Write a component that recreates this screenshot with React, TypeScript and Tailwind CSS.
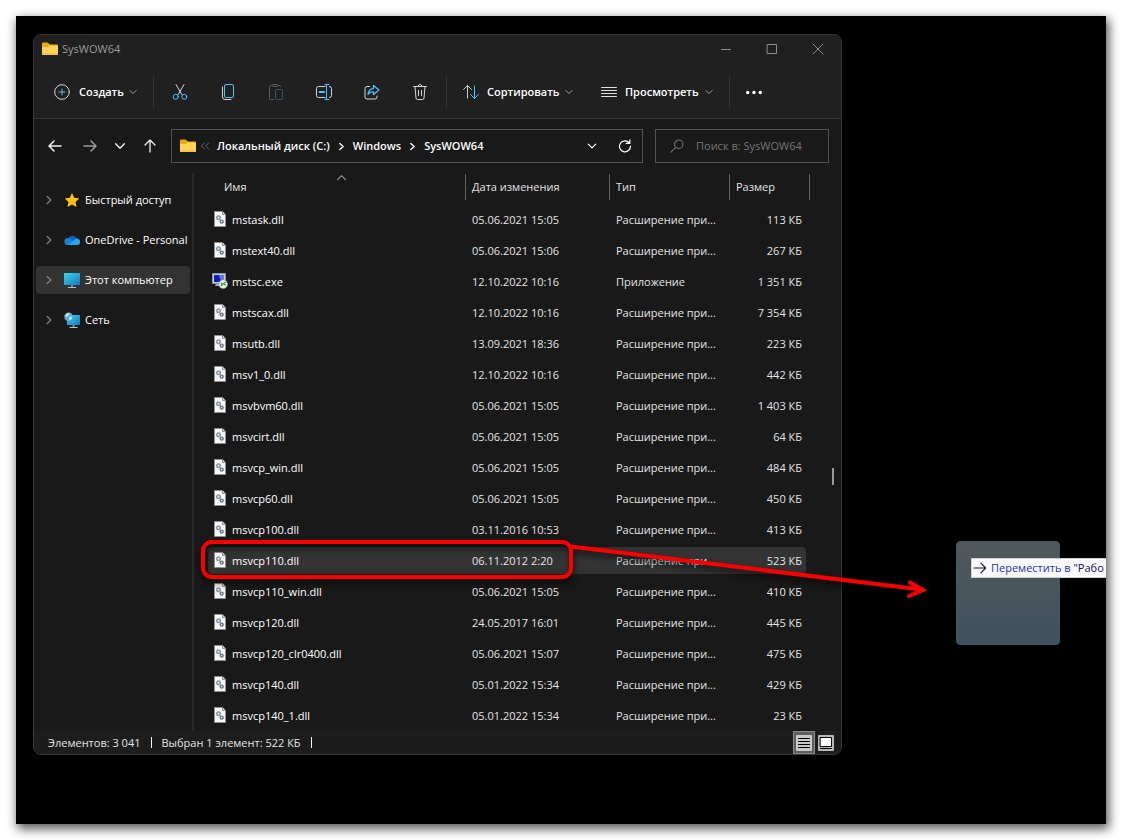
import type { ReactNode } from "react";

type FileRow = {
  name: string;
  date: string;
  type: string;
  size: string;
  exe?: boolean;
  selected?: boolean;
};

const EXT = "Расширение при...";

const files: FileRow[] = [
  { name: "mstask.dll", date: "05.06.2021 15:05", type: EXT, size: "113 КБ" },
  { name: "mstext40.dll", date: "05.06.2021 15:06", type: EXT, size: "267 КБ" },
  { name: "mstsc.exe", date: "12.10.2022 10:16", type: "Приложение", size: "1 351 КБ", exe: true },
  { name: "mstscax.dll", date: "12.10.2022 10:16", type: EXT, size: "7 354 КБ" },
  { name: "msutb.dll", date: "13.09.2021 18:36", type: EXT, size: "223 КБ" },
  { name: "msv1_0.dll", date: "12.10.2022 10:16", type: EXT, size: "442 КБ" },
  { name: "msvbvm60.dll", date: "05.06.2021 15:05", type: EXT, size: "1 403 КБ" },
  { name: "msvcirt.dll", date: "05.06.2021 15:05", type: EXT, size: "64 КБ" },
  { name: "msvcp_win.dll", date: "05.06.2021 15:05", type: EXT, size: "484 КБ" },
  { name: "msvcp60.dll", date: "05.06.2021 15:05", type: EXT, size: "450 КБ" },
  { name: "msvcp100.dll", date: "03.11.2016 10:53", type: EXT, size: "413 КБ" },
  { name: "msvcp110.dll", date: "06.11.2012 2:20", type: EXT, size: "523 КБ", selected: true },
  { name: "msvcp110_win.dll", date: "05.06.2021 15:05", type: EXT, size: "410 КБ" },
  { name: "msvcp120.dll", date: "24.05.2017 16:01", type: EXT, size: "445 КБ" },
  { name: "msvcp120_clr0400.dll", date: "05.06.2021 15:07", type: EXT, size: "475 КБ" },
  { name: "msvcp140.dll", date: "05.01.2022 15:34", type: EXT, size: "429 КБ" },
  { name: "msvcp140_1.dll", date: "05.01.2022 15:34", type: EXT, size: "23 КБ" },
];

const BLUE = "#4cc2ff";

function Icon({ children, className = "size-4" }: { children: ReactNode; className?: string }) {
  return (
    <svg
      viewBox="0 0 16 16"
      fill="none"
      stroke="currentColor"
      strokeLinecap="round"
      strokeLinejoin="round"
      aria-hidden="true"
      className={`shrink-0 ${className}`}
    >
      {children}
    </svg>
  );
}

function ChevronDown({ className }: { className?: string }) {
  return (
    <Icon className={className}>
      <path d="M3 5.500l5 5 5-5" strokeWidth="1.600" />
    </Icon>
  );
}

function ChevronRight({ className }: { className?: string }) {
  return (
    <Icon className={className}>
      <path d="M5 2.500 11 8l-6 5.500" strokeWidth="2.400" />
    </Icon>
  );
}

function FolderIcon() {
  return (
    <svg viewBox="0 0 16 14" aria-hidden="true" className="h-[14px] w-4 shrink-0">
      <path d="M0 1.500Q0 .5 1 .5h4.500L8 2.500h7q1 0 1 1V8H0z" fill="#f0a80c" />
      <path d="M0 5h5.500L8 3.500h7q1 0 1 1V12q0 1-1 1H1q-1 0-1-1z" fill="#ffd45a" />
      <path d="M0 11h16v1q0 1-1 1H1q-1 0-1-1z" fill="#f9c440" />
    </svg>
  );
}

function DllIcon() {
  return (
    <svg viewBox="0 0 16 16" aria-hidden="true" className="size-4 shrink-0">
      <path d="M2.500.5h8l3 3v12h-11z" fill="#f8f8f8" stroke="#8f8f8f" />
      <path d="M10.500.5v3h3" fill="#d8d8d8" stroke="#8f8f8f" />
      <circle cx="6.500" cy="6.700" r="1.800" fill="#dfe4ea" stroke="#8f9aa8" strokeWidth="1.500" />
      <circle cx="9.700" cy="10.600" r="1.500" fill="#dfe4ea" stroke="#6d7783" strokeWidth="1.400" />
    </svg>
  );
}

function ExeIcon() {
  return (
    <svg viewBox="0 0 16 16" aria-hidden="true" className="size-4 shrink-0">
      <path d="M.5.5h13v10H.5z" fill="#c9ced6" stroke="#8d929b" />
      <path d="M2 2h10v7H2z" fill="#0a1fb8" />
      <path d="M7 2h5v7H9z" fill="#5a7be8" />
      <path d="M4 11h5v2H3z" fill="#a9aeb6" />
      <circle cx="11.200" cy="11.200" r="4.300" fill="#eef3ea" stroke="#a8ada6" strokeWidth=".6" />
      <path
        d="m8.800 9.800 1.800 1.600-1.800 1.600M13.600 9l-1.800 1.600 1.800 1.600"
        fill="none"
        stroke="#2f9a2a"
        strokeWidth="1.300"
      />
    </svg>
  );
}

function StarIcon() {
  return (
    <svg viewBox="0 0 16 16" aria-hidden="true" className="size-4 shrink-0">
      <path d="M8 1l2.200 4.800 5.100.6-3.800 3.500 1 5.100L8 12.500 3.500 15l1-5.100L.7 6.400l5.100-.6z" fill="#ffc20e" />
    </svg>
  );
}

function CloudIcon() {
  return (
    <svg viewBox="0 0 16 16" aria-hidden="true" className="size-4 shrink-0">
      <path d="M4 7a4.500 4.500 0 0 1 8.300-.8L10 10 2 9z" fill="#0f5fb4" />
      <path d="M3.800 13A3.500 3.500 0 0 1 4 6q2-.3 4 1.200L10 9l-5.500 4z" fill="#1482d8" />
      <path d="M3.500 13 10 8.800Q11 6 12.800 6.300 16 7 16 9.800 16 13 13 13z" fill="#2aa5ec" />
    </svg>
  );
}

function ComputerIcon() {
  return (
    <svg viewBox="0 0 16 16" aria-hidden="true" className="size-4 shrink-0">
      <defs>
        <linearGradient id="screen" x1="0" y1="0" x2="1" y2="1">
          <stop offset="0" stopColor="#39d6e6" />
          <stop offset="1" stopColor="#1377c8" />
        </linearGradient>
      </defs>
      <rect x="0" y="1" width="16" height="12" rx=".6" fill="url(#screen)" />
      <path d="M7 13h2v2H7z" fill="#7d8a94" />
      <path d="M4 15h8v1H4z" fill="#b9c3ca" />
    </svg>
  );
}

function NetworkIcon() {
  return (
    <svg viewBox="0 0 16 16" aria-hidden="true" className="size-4 shrink-0">
      <rect x="3" y="3" width="13" height="10" rx=".6" fill="url(#screen)" />
      <path d="M8.500 13h2v2h-2z" fill="#7d8a94" />
      <path d="M5.500 15h8v1h-8z" fill="#b9c3ca" />
      <circle cx="4.600" cy="4.800" r="4.400" fill="#5aa9d6" />
      <path d="M1 3.500Q3 .800 6 1L4.500 3.500 2.500 5zM5 5.500l3-1-.5 2.500-2 1.500z" fill="#d5e9f2" />
    </svg>
  );
}

const sidebar = [
  { label: "Быстрый доступ", icon: <StarIcon /> },
  { label: "OneDrive - Personal", icon: <CloudIcon /> },
  { label: "Этот компьютер", icon: <ComputerIcon />, active: true },
  { label: "Сеть", icon: <NetworkIcon /> },
];

const tools = [
  {
    label: "Вырезать",
    icon: (
      <>
        <path d="M4 .5l6 10.300M12 .5 6 10.800" />
        <g stroke={BLUE}>
          <circle cx="3.700" cy="12.800" r="2.500" />
          <circle cx="12.300" cy="12.800" r="2.500" />
        </g>
      </>
    ),
  },
  {
    label: "Копировать",
    icon: (
      <>
        <path d="M2.500 3v10q0 2.500 2.500 2.500h6" />
        <rect x="4.500" y=".5" width="9" height="13" rx="1.500" stroke={BLUE} />
      </>
    ),
  },
  {
    label: "Вставить",
    disabled: true,
    icon: (
      <>
        <path d="M4.500 1.500H2.500q-1 0-1 1v12q0 1 1 1h3M9.500 1.500h2q1 0 1 1" />
        <rect x="4.500" y=".5" width="5" height="2" rx="1" />
        <rect x="7.500" y="5.500" width="7" height="10" rx="1" stroke="#35576b" />
      </>
    ),
  },
  {
    label: "Переименовать",
    icon: (
      <>
        <path d="M9 2.500H2.500q-2 0-2 2v7q0 2 2 2H9M13.500 2.500q2 0 2 2v7q0 2-2 2" />
        <path d="M9 .5h4M9 15.500h4M10.500.5v15" stroke={BLUE} />
        <path d="M3.500 8H8" stroke={BLUE} strokeWidth="2" />
      </>
    ),
  },
  {
    label: "Поделиться",
    icon: (
      <>
        <path d="M5.500 2.500H3q-2 0-2 2V13q0 2 2 2h8q2 0 2-2v-1" />
        <path d="M9.500 1.500 15 6l-5.500 4.500V8Q6 7.500 4 10.500 4.500 5 9.500 4.300z" stroke={BLUE} strokeWidth="1.300" />
      </>
    ),
  },
  {
    label: "Удалить",
    icon: (
      <>
        <path d="M1.500 2.500h13M3 2.500l1 11.500q.2 1.500 1.500 1.500h5q1.300 0 1.500-1.500l1-11.500M6 2.500Q6 .5 8 .5t2 2" />
        <path d="M6.500 6.500v5M9.500 6.500v5" />
      </>
    ),
  },
];

function Separator() {
  return <div className="h-8 w-px shrink-0 bg-[#353535]" />;
}

function TitleBar() {
  return (
    <header className="flex h-[30px] items-start bg-[#202020] text-[#8c8c8c]">
      <div className="flex h-7 flex-1 items-center gap-1 pl-2">
        <FolderIcon />
        <h1 className="pt-px text-[11px] text-[#9a9a9a]">SysWOW64</h1>
      </div>
      <button aria-label="Свернуть" className="flex h-7 w-[46px] items-center justify-center">
        <Icon>
          <path d="M3.500 8.500h9" />
        </Icon>
      </button>
      <button aria-label="Развернуть" className="flex h-7 w-[46px] items-center justify-center">
        <Icon>
          <rect x="3.500" y="3.500" width="9" height="9" />
        </Icon>
      </button>
      <button aria-label="Закрыть" className="flex h-7 w-[46px] items-center justify-center">
        <Icon>
          <path d="M3 3l10 10M13 3 3 13" />
        </Icon>
      </button>
    </header>
  );
}

function Toolbar() {
  return (
    <div className="flex h-[54px] items-center border-b border-[#3a3a3a] bg-[#202020] text-[11px] font-semibold text-white">
      <button className="flex w-[119px] items-center pl-5">
        <Icon className="size-4 text-[#d0d0d0]">
          <circle cx="8" cy="8" r="7.300" />
          <path d="M8 5v6M5 8h6" stroke={BLUE} />
        </Icon>
        <span className="flex-1 pl-[9px] pt-[2px] text-left">Создать</span>
        <ChevronDown className="mr-[15px] size-[10px] text-[#a0a0a0]" />
      </button>
      <Separator />
      <div className="flex px-[2px]">
        {tools.map((tool) => (
          <button
            key={tool.label}
            aria-label={tool.label}
            disabled={tool.disabled}
            className={`flex h-8 w-12 items-center justify-center ${tool.disabled ? "text-[#5c5c5c]" : "text-[#d6d6d6]"}`}
          >
            <Icon>{tool.icon}</Icon>
          </button>
        ))}
      </div>
      <Separator />
      <button className="flex w-[138px] items-center pl-4">
        <Icon className="size-4 text-[#d0d0d0]">
          <path d="M4.500 14V1.500M.5 5.500l4-4 4 4" />
          <path d="M11.500 2v12.500M7.500 10.500l4 4 4-4" stroke={BLUE} />
        </Icon>
        <span className="flex-1 pl-2 pt-[2px] text-left">Сортировать</span>
        <ChevronDown className="mr-[11px] size-[10px] text-[#a0a0a0]" />
      </button>
      <button className="flex w-[144px] items-center pl-4">
        <Icon className="size-4 text-[#e0e0e0]">
          <path d="M.5 3.500h15M.5 6.500h15M.5 9.500h15M.5 12.500h15" />
        </Icon>
        <span className="flex-1 pl-2 pt-[2px] text-left">Просмотреть</span>
        <ChevronDown className="mr-[15px] size-[10px] text-[#a0a0a0]" />
      </button>
      <Separator />
      <button aria-label="Дополнительно" className="flex h-8 w-12 items-center justify-center">
        <Icon>
          <g fill="currentColor" stroke="none">
            <circle cx="1.700" cy="8.500" r="1.700" />
            <circle cx="8" cy="8.500" r="1.700" />
            <circle cx="14.300" cy="8.500" r="1.700" />
          </g>
        </Icon>
      </button>
    </div>
  );
}

function AddressBar() {
  return (
    <div className="flex h-[54px] items-center pl-[3px] pr-3 text-[#f0f0f0]">
      <button aria-label="Назад" className="flex h-8 w-9 items-center justify-center">
        <Icon>
          <path d="M14 8H2.500M7 3 2 8l5 5" strokeWidth="1.500" />
        </Icon>
      </button>
      <button aria-label="Вперёд" className="flex h-8 w-[34px] items-center justify-center text-[#9a9a9a]">
        <Icon>
          <path d="M2 8h11.500M9 3l5 5-5 5" strokeWidth="1.500" />
        </Icon>
      </button>
      <button aria-label="Последние расположения" className="flex h-8 w-[26px] items-center justify-center">
        <ChevronDown className="size-[14px]" />
      </button>
      <button aria-label="Вверх" className="mr-1 flex h-8 w-[34px] items-center justify-center">
        <Icon>
          <path d="M8 14V2.500M3 7l5-5 5 5" strokeWidth="1.300" />
        </Icon>
      </button>
      <nav
        aria-label="Адрес"
        className="flex h-[34px] flex-1 items-center border border-[#535353] pl-2 text-[11px] font-semibold text-white"
      >
        <FolderIcon />
        <Icon className="ml-1 size-[10px] text-[#6a6a6a]">
          <path d="M7 3 2 8l5 5M14 3 9 8l5 5" strokeWidth="1.600" />
        </Icon>
        <a href="#c" className="ml-[7px] whitespace-nowrap">
          Локальный диск (C:)
        </a>
        <ChevronRight className="mx-[7px] size-[9px]" />
        <a href="#windows">Windows</a>
        <ChevronRight className="mx-[7px] size-[9px]" />
        <a href="#syswow64">SysWOW64</a>
        <button aria-label="Предыдущие расположения" className="ml-auto flex h-8 w-[33px] items-center justify-center">
          <ChevronDown className="size-3" />
        </button>
        <button aria-label="Обновить" className="flex h-8 w-[34px] items-center justify-center">
          <Icon className="size-[14px]">
            <path d="M13 4.500A6.300 6.300 0 1 0 14.300 8M13.500 1v4h-4" strokeWidth="1.400" />
          </Icon>
        </button>
      </nav>
      <label className="ml-3 flex h-[34px] w-[174px] items-center gap-3 border border-[#535353] pl-[14px]">
        <Icon className="size-[14px] text-[#777777]">
          <circle cx="10" cy="6" r="4.800" strokeWidth="1.200" />
          <path d="M6.500 9.500 1 15" strokeWidth="1.200" />
        </Icon>
        <input
          type="text"
          aria-label="Поиск"
          placeholder="Поиск в: SysWOW64"
          className="w-full min-w-0 bg-transparent text-[11px] outline-none placeholder:text-[#757575]"
        />
      </label>
    </div>
  );
}

function Sidebar() {
  return (
    <nav
      aria-label="Область переходов"
      className="w-[160px] shrink-0 border-r-2 border-[#292929] pl-[2px] pr-[2px] pt-[13px]"
    >
      <ul className="flex flex-col gap-3">
        {sidebar.map((item) => (
          <li key={item.label}>
            <a
              href="#"
              className={`flex h-7 items-center rounded-sm pl-2 text-[11px] whitespace-nowrap text-white ${item.active ? "bg-[#333333]" : ""}`}
            >
              <ChevronRight className="size-[10px] text-[#7a7a7a]" />
              <span className="ml-[10px] mr-[5px]">{item.icon}</span>
              {item.label}
            </a>
          </li>
        ))}
      </ul>
    </nav>
  );
}

function FileTable() {
  const headCell = "relative h-[26px] border-r border-[#636363] p-0 text-left font-normal";
  return (
    <div className="flex min-w-0 flex-1 pt-px">
      <table className="w-full flex-1 table-fixed border-separate border-spacing-0 text-[11px] leading-4 text-[#e4e4e4]">
        <colgroup>
          <col />
          <col className="w-[144px]" />
          <col className="w-[120px]" />
          <col className="w-[80px]" />
        </colgroup>
        <thead>
          <tr>
            <th className={`${headCell} pl-[30px]`}>
              Имя
              <Icon className="absolute left-1/2 top-0 ml-[7px] size-[9px] text-[#a0a0a0]">
                <path d="M1 10 8 3l7 7" strokeWidth="1.800" />
              </Icon>
            </th>
            <th className={`${headCell} pl-[6px]`}>Дата изменения</th>
            <th className={`${headCell} pl-[6px]`}>Тип</th>
            <th className={`${headCell} pl-[6px]`}>Размер</th>
          </tr>
          <tr aria-hidden="true">
            <td colSpan={4} className="h-1 p-0" />
          </tr>
        </thead>
        <tbody>
          {files.map((file) => {
            const fill = file.selected ? "bg-[#333333]" : "";
            return (
              <tr key={file.name} className="whitespace-nowrap">
                <td className="py-[2px] pl-[14px] pr-0">
                  <div className={`flex h-[27px] items-center gap-1 rounded-l-sm pb-px pl-1 text-white ${fill}`}>
                    {file.exe ? <ExeIcon /> : <DllIcon />}
                    <span className="pt-[2px]">{file.name}</span>
                  </div>
                </td>
                <td className="px-0 py-[2px]">
                  <div className={`flex h-[27px] items-center pl-[6px] pt-px ${fill}`}>{file.date}</div>
                </td>
                <td className="px-0 py-[2px]">
                  <div className={`flex h-[27px] items-center pl-[6px] pt-px ${fill}`}>{file.type}</div>
                </td>
                <td className="py-[2px] pl-0 pr-1">
                  <div className={`flex h-[27px] items-center justify-end rounded-r-sm pr-1 pt-px ${fill}`}>
                    {file.size}
                  </div>
                </td>
              </tr>
            );
          })}
        </tbody>
      </table>
      <div className="flex w-[31px] shrink-0 flex-col items-end bg-[#191919] pr-[7px] pt-[294px]">
        <div className="h-[17px] w-[2px] bg-[#9a9a9a]" />
      </div>
    </div>
  );
}

function StatusBar() {
  return (
    <footer className="flex h-[23px] items-center bg-[#1d1d1d] pl-[14px] text-[11px] leading-4 text-[#e4e4e4]">
      <span className="pt-px">Элементов: 3 041</span>
      <span className="mx-[10px] h-[11px] w-px bg-white" />
      <span className="pt-px">Выбран 1 элемент: 522 КБ</span>
      <span className="mx-[10px] h-[11px] w-px bg-white" />
      <div className="ml-auto flex items-center gap-[3px] pr-[7px]">
        <button
          aria-label="Таблица"
          className="flex h-[23px] w-[22px] items-center justify-center border border-[#8a8a8a] bg-[#5e5e5e]"
        >
          <Icon>
            <rect width="16" height="16" rx="1" fill="#c8c8c8" stroke="none" />
            <path d="M2.500 3.500h11M2.500 6.500h11M2.500 9.500h11M2.500 12.500h11" stroke="#000" />
          </Icon>
        </button>
        <button aria-label="Крупные значки" className="flex size-4 items-center justify-center">
          <Icon>
            <rect width="16" height="16" rx="1" fill="#b8b8b8" stroke="none" />
            <rect x="2.500" y="2.500" width="11" height="9" fill="#fff" stroke="#000" />
            <path d="M2.500 13.500h11" stroke="#000" />
          </Icon>
        </button>
      </div>
    </footer>
  );
}

function Annotation() {
  return (
    <svg
      width="740"
      height="64"
      viewBox="0 0 740 64"
      fill="none"
      stroke="#fb0000"
      strokeWidth="4"
      aria-hidden="true"
      className="absolute left-[180px] top-[520px] drop-shadow-[1px_4px_3px_rgba(0,0,0,0.7)]"
    >
      <rect x="7" y="6" width="368" height="35" rx="9" />
      <path d="M375 10.500 725 53.500" />
      <path d="M714 46.500 727 54 713 60" strokeLinecap="round" />
    </svg>
  );
}

export default function App() {
  return (
    <div className="bg-white p-4 font-['Open_Sans','Noto_Sans',sans-serif]">
      <main className="relative bg-black pb-[69px] pl-[17px] pr-[264px] pt-[18px] shadow-[2px_4px_10px_1px_rgba(0,0,0,0.65)]">
        <section className="overflow-hidden rounded-lg border border-[#363636] bg-[#191919]">
          <TitleBar />
          <Toolbar />
          <AddressBar />
          <div className="flex">
            <Sidebar />
            <FileTable />
          </div>
          <StatusBar />
        </section>

        <div className="absolute right-[46px] top-[525px] size-[104px] rounded-sm border border-[#3f5a68] bg-linear-to-b from-[#50585a] to-[#3f515c]" />
        <div className="absolute right-0 top-[542px] flex h-5 w-[135px] items-center gap-1 border-y border-l border-[#d0d0d0] bg-[#f9f9fb] pl-px text-[11px] whitespace-nowrap text-[#1c2fc4]">
          <Icon className="size-[14px] text-[#1a1a1a]">
            <path d="M1 8h13M9 2.500 14.500 8 9 13.500" strokeWidth="1.300" />
          </Icon>
          <span>
            Переместить в <span className="text-[#10106a]">"Рабо</span>
          </span>
        </div>
        <Annotation />
      </main>
    </div>
  );
}
